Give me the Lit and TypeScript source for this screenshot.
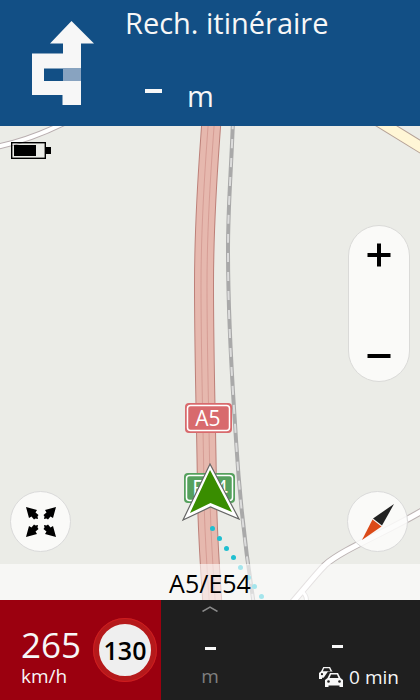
import { LitElement, html, css, svg } from "lit";
import { customElement, property } from "lit/decorators.js";

const HIGHWAY = "M211.5 120 C208 170 204 215 204 285 C204 370 207 450 207 500 C208 540 210 570 212.500 605";
const RAIL = "M233 120 C231 175 228 205 228 250 C228 330 233 390 236 440 C240 505 246 555 254 605";
const LANE = "M422 511 C385 533 343 549 325 565 C317 573 305 588 291 604";

@customElement("nav-map")
class NavMap extends LitElement {
  static styles = css`
    :host { display: block; }
    svg { display: block; width: 100%; height: 100%; }
    .edge, .fill, .seam { fill: none; }
    .shield { font-family: "Open Sans", "Noto Sans", sans-serif; font-size: 21px; fill: #fff; text-anchor: middle; }
  `;

  render() {
    const dots = [[212, 528], [219, 538], [226, 548], [233, 557], [240, 567], [248, 577], [254, 586], [261, 596]];
    return html`
      <svg viewBox="0 126 420 474" preserveAspectRatio="xMidYMid slice" aria-hidden="true">
        <rect y="0" width="420" height="700" fill="#ebece7" />
        <path class="edge" d="M-4 147 Q30 140 64 123" stroke="#b9aeb0" stroke-width="6" />
        <path class="fill" d="M-4 147 Q30 140 64 123" stroke="#fff" stroke-width="4" />
        <path class="edge" d="M372 117 L424 149" stroke="#b5a196" stroke-width="12" />
        <path class="fill" d="M372 117 L424 149" stroke="#fff6d6" stroke-width="10" />
        <path class="edge" d=${LANE} stroke="#bdb4b4" stroke-width="7" />
        <path class="edge" d="M302 592 Q308 596 306 604" stroke="#c8c4c4" stroke-width="5" />
        <path class="fill" d=${LANE} stroke="#fff" stroke-width="5" />
        <path class="fill" d="M301 591 Q308 595 306 604" stroke="#fff" stroke-width="3" />
        <path class="edge" d=${RAIL} stroke="#a9a9a9" stroke-width="4" />
        <path class="fill" d=${RAIL} stroke="#dcdcdc" stroke-width="2" stroke-dasharray="9 10" />
        <path class="edge" d=${HIGHWAY} stroke="#bd8079" stroke-width="20" />
        <path class="fill" d=${HIGHWAY} stroke="#e6b8ae" stroke-width="18" />
        <path class="seam" d=${HIGHWAY} stroke="#d69d95" stroke-width="7" />
        <path class="seam" d=${HIGHWAY} stroke="#e6b8ae" stroke-width="5" />

        <rect x="185" y="403" width="47" height="30" rx="4" fill="#d86a6d" />
        <rect x="187.500" y="405.500" width="42" height="25" rx="3" fill="none" stroke="#fff" stroke-width="1.500" />
        <text class="shield" x="208" y="426">A5</text>
        <rect x="184" y="473" width="51" height="30" rx="4" fill="#55a05d" />
        <rect x="186.500" y="475.500" width="46" height="25" rx="3" fill="none" stroke="#fff" stroke-width="1.500" />
        <text class="shield" x="210" y="496">E54</text>

        ${dots.map(([x, y]) => svg`<circle cx=${x + 0.5} cy=${y + 0.5} r="2.500" fill="#1fbfd0" />`)}
        <path d="M210 464 L239 519 L210.500 507 L183 520 Z" fill="#fff" stroke="#666" stroke-width="1.200" />
        <path d="M210 470 L232 512 L210.500 503 L190 513 Z" fill="#398d00" />
      </svg>
    `;
  }
}

@customElement("app-root")
class AppRoot extends LitElement {
  @property({ type: Number }) speed = 265;
  @property({ type: Number }) limit = 130;

  static styles = css`
    :host {
      display: flex;
      flex-direction: column;
      min-height: 100vh;
      font-family: "Open Sans", "Noto Sans", sans-serif;
      color: #f7f7f7;
      background: #1f1f1f;
    }
    svg { display: block; }
    button {
      display: grid;
      place-items: center;
      padding: 0;
      border: 0;
      background: none;
      color: #000;
      cursor: pointer;
    }
    .guidance {
      display: flex;
      height: 126px;
      background: #124f85;
    }
    .turn { flex: none; margin: 20px 0 0 30px; }
    .next { margin-left: 30px; }
    .street {
      margin: 3px 0 0;
      font-size: 29px;
      line-height: 40px;
      font-weight: 400;
      white-space: nowrap;
    }
    .distance {
      display: flex;
      align-items: center;
      gap: 25px;
      margin: 33px 0 0 20px;
      font-size: 29px;
      line-height: 40px;
    }
    .dash { width: 17px; height: 4px; margin-bottom: 10px; background: currentColor; }
    .stage {
      position: relative;
      display: flex;
      flex-direction: column;
      flex: 1;
      color: #000;
    }
    .canvas { position: absolute; inset: 0; }
    .battery, .zoom, .tools, .road { position: relative; }
    .battery { margin: 16px 0 0 11px; }
    .zoom {
      display: flex;
      flex-direction: column;
      justify-content: space-between;
      align-self: flex-end;
      box-sizing: border-box;
      width: 62px;
      height: 157px;
      margin: 66px 10px 24px 0;
      border: 1px solid #dadad8;
      border-radius: 31px;
      background: #fafaf8;
    }
    .zoom button { height: 58px; }
    .tools {
      display: flex;
      justify-content: space-between;
      margin-top: auto;
      padding: 0 12px 12px 10px;
    }
    .tool {
      box-sizing: border-box;
      width: 61px;
      height: 61px;
      border: 1px solid #dadada;
      border-radius: 50%;
      background: rgba(252, 252, 251, 0.88);
    }
    .road {
      height: 36px;
      background: rgba(255, 255, 255, 0.6);
      text-align: center;
      font-size: 25px;
      line-height: 38px;
    }
    .status {
      display: grid;
      grid-template-columns: 161fr 98fr 161fr;
      height: 100px;
    }
    .pace {
      display: flex;
      align-items: center;
      justify-content: space-between;
      padding: 0 4px 0 21px;
      background: #9b000f;
    }
    .reading { padding-top: 14px; }
    .speed { font-size: 35px; line-height: 38px; }
    .unit { font-size: 19px; line-height: 24px; }
    .limit {
      display: grid;
      place-items: center;
      box-sizing: border-box;
      width: 64px;
      height: 64px;
      border: 6px solid #b5191b;
      border-radius: 50%;
      outline: 1px solid #d01c1f;
      outline-offset: -1px;
      background: #efefef;
      color: #000;
      font-size: 25px;
      font-weight: 600;
    }
    .left, .trip {
      display: flex;
      flex-direction: column;
      align-items: center;
    }
    .chevron { width: 100%; height: 18px; }
    .small { width: 11px; height: 3px; background: currentColor; }
    .left .small { margin-top: 29px; }
    .left .unit { margin-top: 14px; color: #7f7f7f; }
    .trip .small { margin: 45px 4px 0 0; }
    .delay {
      display: flex;
      align-items: center;
      gap: 6px;
      margin-top: 17px;
      padding-left: 39px;
      font-size: 19px;
      line-height: 24px;
      white-space: nowrap;
    }
  `;

  private arrowOut(angle: number) {
    return svg`<path transform="rotate(${angle} 15 15)" d="M0 0 L11 3 L9.500 5.500 L12.500 8 L11.500 9.500 L12 12 L9.500 11.500 L8 12.500 L5.500 9.500 L3 11 Z" />`;
  }

  private car() {
    return svg`
      <path d="M5 0 H13 L15.500 5 L18 7 V14 H14.500 V12.500 H3.500 V14 H0 V7 L2.500 5 Z" fill="#f7f7f7" />
      <path d="M6 1.500 H12 L13.500 5 H4.500 Z" fill="#1f1f1f" />
      <circle cx="3.500" cy="8.500" r="1.300" fill="#1f1f1f" />
      <circle cx="14.500" cy="8.500" r="1.300" fill="#1f1f1f" />`;
  }

  render() {
    return html`
      <header class="guidance">
        <svg class="turn" width="65" height="86" viewBox="30 20 65 86" role="img" aria-label="Manœuvre">
          <path fill="#f7f7f7" fill-rule="evenodd" d="M71.500 21 L94 43.500 H81 V105 H62.500 V95 H32 V53.500 H63 V43.500 H50 Z M44 68.500 V81 H81 V68.500 Z" />
          <path fill="#88a3c0" d="M63 68.500 H81 V81 H63 Z" />
        </svg>
        <div class="next">
          <h1 class="street">Rech. itinéraire</h1>
          <div class="distance"><span class="dash"></span><span>m</span></div>
        </div>
      </header>

      <main class="stage">
        <nav-map class="canvas"></nav-map>
        <svg class="battery" width="41" height="17" viewBox="0 0 41 17" role="img" aria-label="Batterie">
          <rect x="0.700" y="0.700" width="33.600" height="15.600" fill="none" stroke="#000" stroke-width="1.400" />
          <rect x="3" y="3" width="22" height="11" />
          <rect x="35" y="5" width="5" height="7" />
        </svg>
        <div class="zoom">
          <button aria-label="Zoom avant">
            <svg width="24" height="24" viewBox="0 0 24 24"><path d="M0.500 12 H23.500 M12 0.500 V23.500" stroke="#000" stroke-width="4" /></svg>
          </button>
          <button aria-label="Zoom arrière">
            <svg width="24" height="24" viewBox="0 0 24 24"><path d="M0.500 16 H23.500" stroke="#000" stroke-width="4" /></svg>
          </button>
        </div>
        <div class="tools">
          <button class="tool" aria-label="Plein écran">
            <svg width="30" height="30" viewBox="0 0 30 30">${[0, 90, 180, 270].map((a) => this.arrowOut(a))}</svg>
          </button>
          <button class="tool" aria-label="Boussole">
            <svg width="34" height="38" viewBox="0 0 34 38">
              <path d="M33 1 L12 15.500 L21 22.500 Z" fill="#222" />
              <path d="M1 37 L11.500 16.500 L20.500 23.500 Z" fill="#db4a18" />
            </svg>
          </button>
        </div>
        <div class="road">A5/E54</div>
      </main>

      <footer class="status">
        <section class="pace">
          <div class="reading">
            <div class="speed">${this.speed}</div>
            <div class="unit">km/h</div>
          </div>
          <div class="limit">${this.limit}</div>
        </section>
        <section class="left">
          <button class="chevron" aria-label="Détails">
            <svg width="16" height="6" viewBox="0 0 16 6"><path d="M0.500 5.500 L8 1 L15.500 5.500" fill="none" stroke="#8a8a8a" stroke-width="1.500" /></svg>
          </button>
          <div class="small"></div>
          <div class="unit">m</div>
        </section>
        <section class="trip">
          <div class="small"></div>
          <div class="delay">
            <svg width="24" height="20" viewBox="0 0 24 20" aria-hidden="true">
              <g transform="scale(0.850)">${this.car()}</g>
              <path d="M9 4.500 H20 L24 12 V20 H4.500 V11 Z" fill="#1f1f1f" />
              <g transform="translate(6 6)">${this.car()}</g>
            </svg>
            <span>0 min</span>
          </div>
        </section>
      </footer>
    `;
  }
}
